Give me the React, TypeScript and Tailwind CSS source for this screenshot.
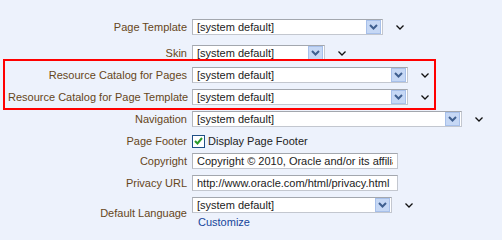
import React from "react";

const DropButton = () => (
    <div className="w-[15px] h-[14px] mr-px bg-[#c6d8f5] border border-[#a7c0ea] flex items-center justify-center">
        <svg width="9" height="6" viewBox="0 0 9 6">
            <path d="M1 1 L4.5 4.5 L8 1" stroke="#3f5f8f" strokeWidth="2" fill="none"/>
        </svg>
    </div>
);

const Chevron = () => (
    <svg width="8" height="5" viewBox="0 0 8 5" className="ml-[13px]">
        <path d="M0.5 0.5 L4 4 L7.5 0.5" stroke="#111" strokeWidth="1.3" fill="none"/>
    </svg>
);

function Select({width}: { width: string }) {
    return (
        <div className="flex items-center">
            <div
                className={`${width} h-4 bg-white border border-[#c3c7cf] border-t-[#a3a7ae] border-l-[#b3b6bd] flex items-center justify-between`}>
                <span className="pl-1 text-[#222]">[system default]</span>
                <DropButton/>
            </div>
            <Chevron/>
        </div>
    );
}

function TextInput({value}: { value: string }) {
    return (
        <input
            readOnly
            value={value}
            className="block w-[206px] h-4 px-1 bg-white text-[#222] border border-[#c3c7cf] border-t-[#a3a7ae] border-l-[#b3b6bd] outline-none"
        />
    );
}

function Row({label, className = "", children}: { label: string; className?: string; children: React.ReactNode }) {
    return (
        <div className={`flex items-center ${className}`}>
            <div className="w-[187px] pl-2 text-right text-[#66461a] whitespace-nowrap">{label}</div>
            <div className="ml-[5px]">{children}</div>
        </div>
    );
}

export default function App() {
    return (
        <div
            className="relative w-[502px] h-[240px] bg-[#edf2fc] pt-[19px] text-[11px] leading-[13px]"
            style={{fontFamily: '"Liberation Sans", Arial, sans-serif'}}>
            <Row label="Page Template"><Select width="w-[191px]"/></Row>
            <Row label="Skin" className="mt-[10px]"><Select width="w-[133px]"/></Row>
            <Row label="Resource Catalog for Pages" className="mt-[6px]"><Select width="w-[216px]"/></Row>
            <Row label="Resource Catalog for Page Template" className="mt-[6px]"><Select width="w-[216px]"/></Row>
            <Row label="Navigation" className="mt-[6px]"><Select width="w-[270px]"/></Row>
            <Row label="Page Footer" className="mt-[6px] h-4">
                <div className="flex items-center">
                    <div className="w-[13px] h-[13px] bg-white border border-[#1f4f86] flex items-center justify-center">
                        <svg width="9" height="8" viewBox="0 0 9 8">
                            <path d="M1 4 L3.5 6.5 L8 1" stroke="#2a9a2a" strokeWidth="2" fill="none"/>
                        </svg>
                    </div>
                    <span className="ml-[3px] text-[#222]">Display Page Footer</span>
                </div>
            </Row>
            <Row label="Copyright" className="mt-[4px]">
                <TextInput value="Copyright © 2010, Oracle and/or its affiliates. All rights reserved."/>
            </Row>
            <Row label="Privacy URL" className="mt-[6px]">
                <TextInput value="http://www.oracle.com/html/privacy.html"/>
            </Row>
            <Row label="Default Language" className="mt-[6px]">
                <div className="flex flex-col">
                    <Select width="w-[200px]"/>
                    <a className="pl-[6px] mt-[3px] text-[#16469b]">Customize</a>
                </div>
            </Row>

            <div className="absolute left-[3px] top-[59px] w-[433px] h-[51px] border-2 border-[#ff0000]"/>
        </div>
    );
}
